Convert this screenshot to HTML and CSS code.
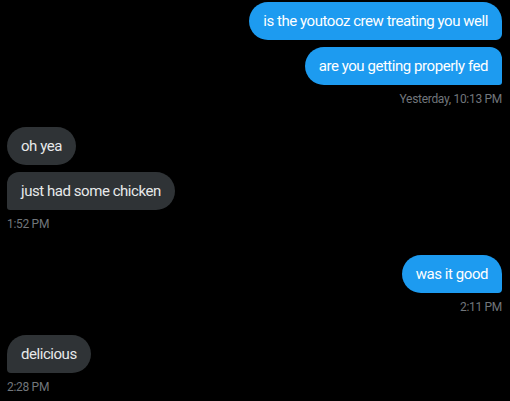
FILE: index.html
```html
<!DOCTYPE html>
<html lang="en">
<head>
<meta charset="utf-8">
<title>Messages</title>
<link rel="stylesheet" href="styles.css">
</head>
<body>
<main class="chat">
  <section class="group sent first">
    <div class="bubble top">is the youtooz crew treating you well</div>
    <div class="bubble bottom">are you getting properly fed</div>
    <div class="time">Yesterday, 10:13 PM</div>
  </section>
  <section class="group received g2">
    <div class="bubble top">oh yea</div>
    <div class="bubble bottom">just had some chicken</div>
    <div class="time">1:52 PM</div>
  </section>
  <section class="group sent g3">
    <div class="bubble single">was it good</div>
    <div class="time">2:11 PM</div>
  </section>
  <section class="group received g4">
    <div class="bubble single">delicious</div>
    <div class="time">2:28 PM</div>
  </section>
</main>
</body>
</html>
```
FILE: styles.css
```css
html, body {
  margin: 0;
  padding: 0;
  background: #000;
}
body {
  font-family: Roboto, "Liberation Sans", sans-serif;
}
.chat {
  width: 510px;
  height: 401px;
  box-sizing: border-box;
  padding: 2px 8px 0 7px;
  display: flex;
  flex-direction: column;
  overflow: hidden;
}
.group {
  display: flex;
  flex-direction: column;
  gap: 7px;
}
.group.sent { align-items: flex-end; }
.group.received { align-items: flex-start; }
.g2 { margin-top: 20px; }
.g3 { margin-top: 23px; }
.g4 { margin-top: 20px; }
.bubble {
  box-sizing: border-box;
  height: 38px;
  padding: 9px 14px;
  font-size: 15px;
  line-height: 20px;
  letter-spacing: -0.45px;
  color: #fff;
  white-space: nowrap;
  border-radius: 19px;
}
.sent .bubble { background: #1d9bf0; }
.received .bubble { background: #2f3336; color: #e7e9ea; }
.sent .top { border-bottom-right-radius: 6px; }
.sent .bottom { border-top-right-radius: 12px; border-bottom-right-radius: 3px; }
.sent .single { border-bottom-right-radius: 4px; }
.received .top { border-bottom-left-radius: 19px; }
.received .bottom { border-top-left-radius: 12px; border-bottom-left-radius: 3px; }
.received .single { border-bottom-left-radius: 4px; }
.time {
  margin-top: -1px;
  font-size: 12px;
  line-height: 16px;
  letter-spacing: -0.3px;
  color: #71767b;
}
```
